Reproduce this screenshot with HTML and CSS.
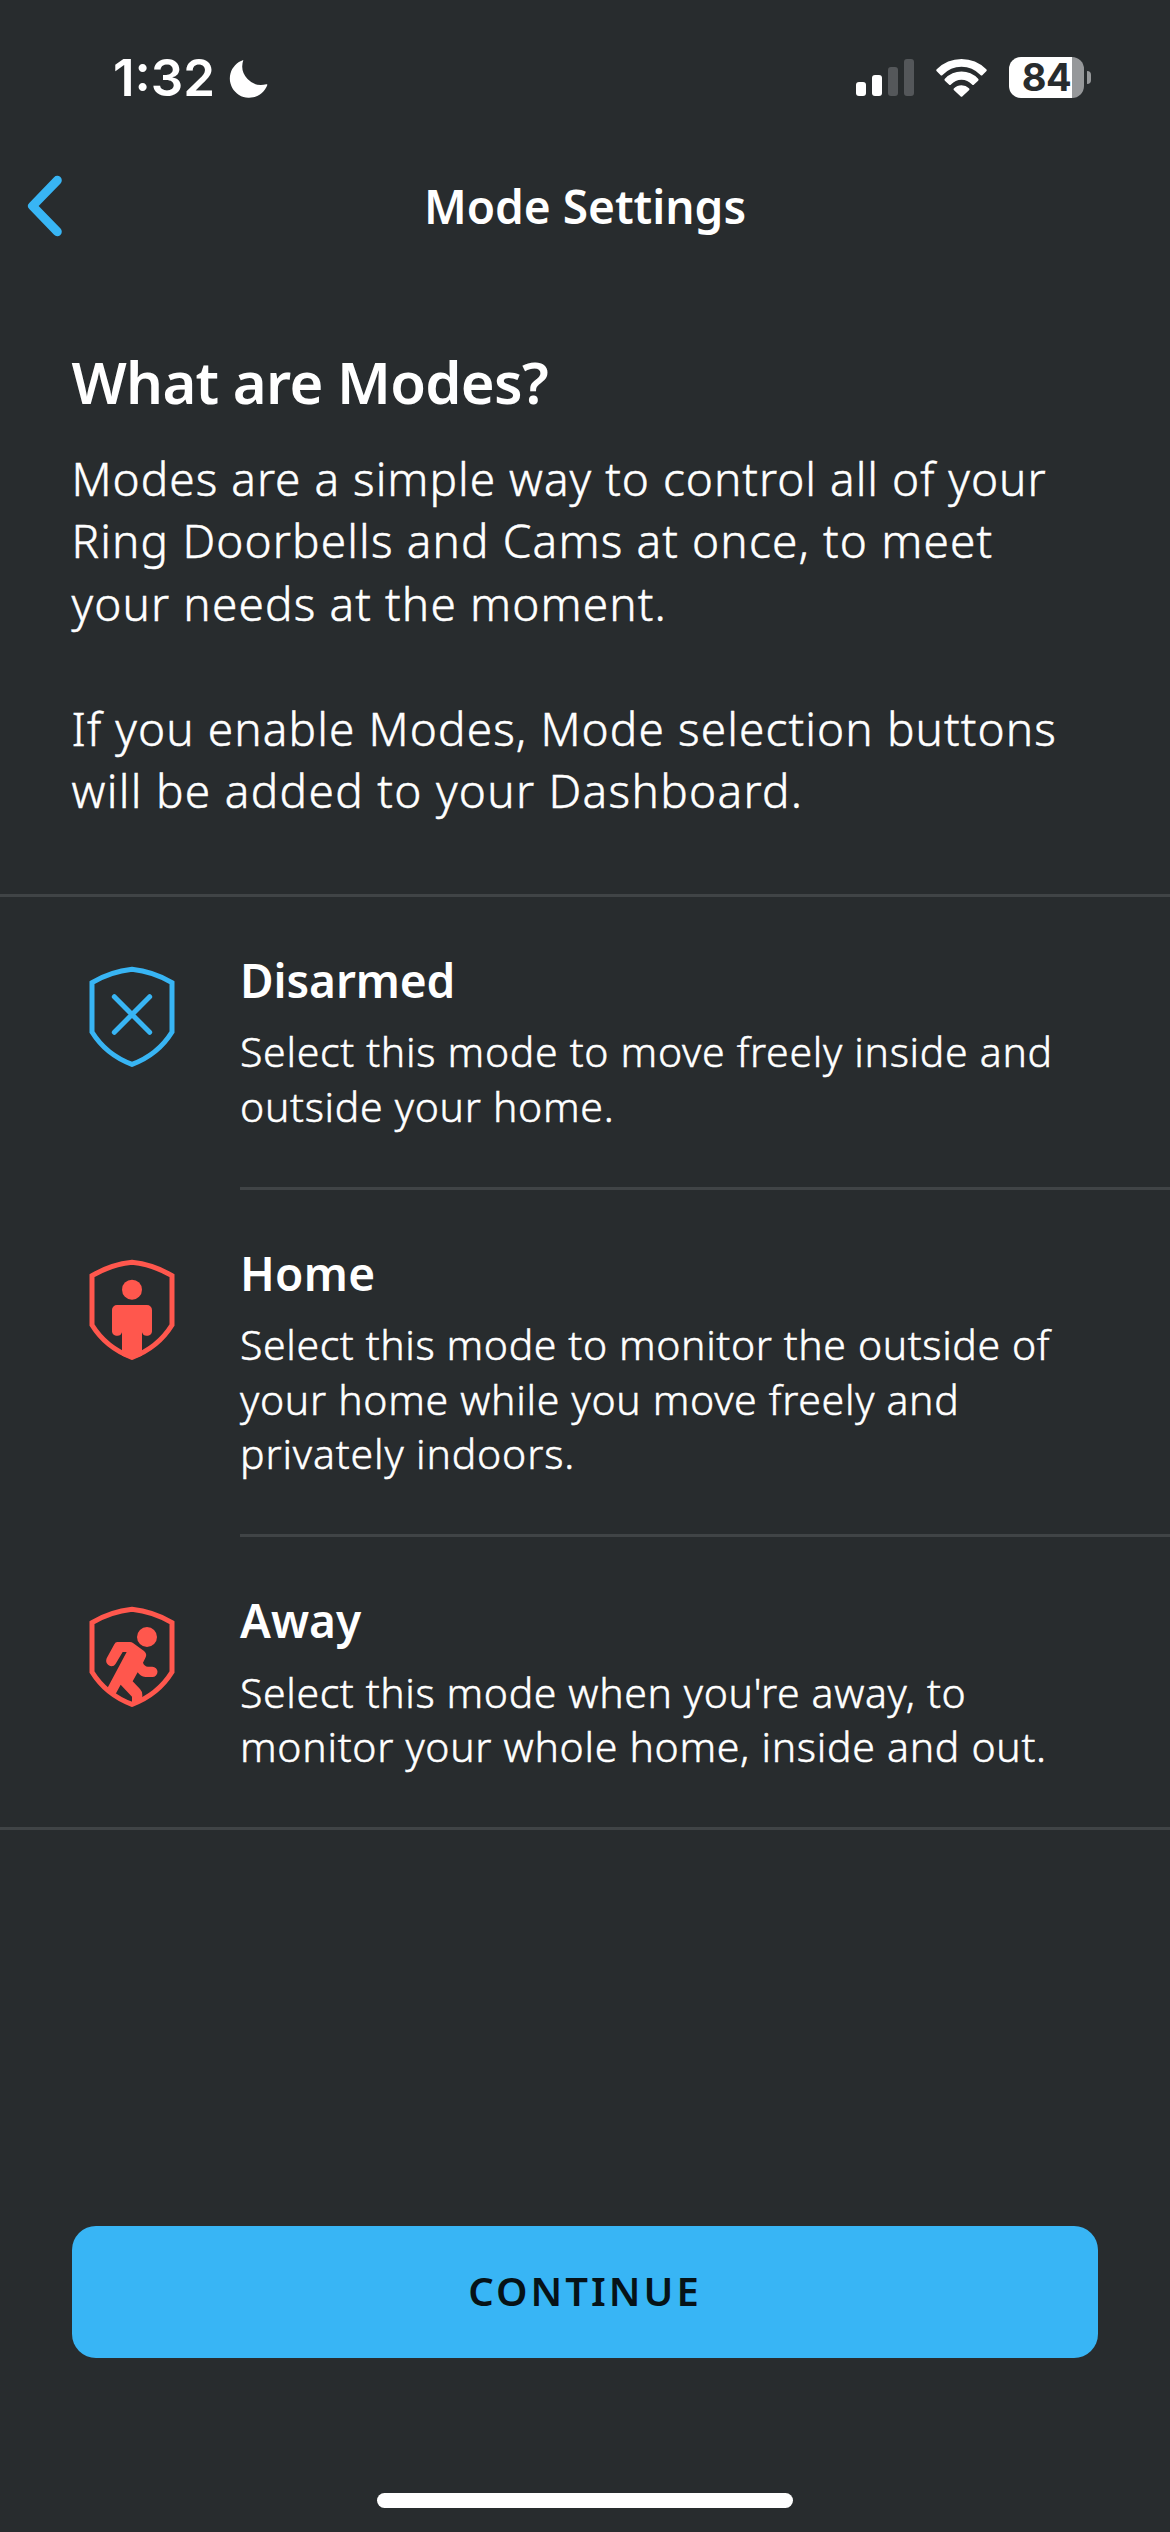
FILE: index.html
```html
<!DOCTYPE html>
<html lang="en">
<head>
<meta charset="utf-8">
<title>Mode Settings</title>
<link rel="stylesheet" href="styles.css">
</head>
<body>
<div class="screen">
  <div class="status">
    <div class="status-left">
      <span class="time">1:32</span>
      <svg class="moon" viewBox="0 0 120 120"><path d="M46 3A58 58 0 1 0 118 78Q119 75 115 76A57 57 0 0 1 46 3Z"/></svg>
    </div>
    <div class="status-right">
      <svg class="signal" viewBox="0 0 58 37">
        <rect x="0" y="23" width="10" height="14" rx="3"/>
        <rect x="16" y="16" width="10" height="21" rx="3"/>
        <rect class="dim" x="32" y="8" width="10" height="29" rx="3"/>
        <rect class="dim" x="48" y="0" width="10" height="37" rx="3"/>
      </svg>
      <svg class="wifi" viewBox="0 0 150 112">
        <path d="M2 30Q33 0 75 0T148 30Q151 33 148 36L137 47Q134 50 131 47Q107 23 75 23T19 47Q16 50 13 47L2 36Q-1 33 2 30Z"/>
        <path d="M26 58Q47 37 75 37T124 58Q127 61 124 64L112 75Q109 78 106 75Q93 61 75 61T44 75Q41 78 38 75L26 64Q23 61 26 58Z"/>
        <path d="M53 86Q62 77 75 77T97 86Q100 89 97 92L78 110Q75 113 72 110L53 92Q50 89 53 86Z"/>
      </svg>
      <div class="battery">
        <span class="battery-body">84</span>
        <span class="battery-cap"></span>
      </div>
    </div>
  </div>

  <header class="nav">
    <svg class="back" viewBox="0 0 40 64"><path d="M32.300 6.300L7.500 32L32.300 57.700"/></svg>
    <h1 class="nav-title">Mode Settings</h1>
  </header>

  <section class="intro">
    <h2 class="intro-title">What are Modes?</h2>
    <p class="intro-text"><span>Modes are a simple way to control all of your</span> <span>Ring Doorbells and Cams at once, to meet</span> <span>your needs at the moment.</span></p>
    <p class="intro-text second"><span>If you enable Modes, Mode selection buttons</span> <span>will be added to your Dashboard.</span></p>
  </section>

  <ul class="modes">
    <li class="mode disarmed">
      <svg class="shield" viewBox="0 0 390 390">
        <path class="line" d="M66 98Q122 65 186 58Q250 65 306 98V246Q264 314 186 343Q108 314 66 246Z"/>
        <path class="line round" d="M133 140L239 247M239 140L133 247"/>
      </svg>
      <div class="mode-text">
        <h3>Disarmed</h3>
        <p><span>Select this mode to move freely inside and</span> <span>outside your home.</span></p>
      </div>
    </li>
    <li class="mode home">
      <svg class="shield" viewBox="0 0 390 390">
        <path class="line" d="M66 98Q122 65 186 58Q250 65 306 98V246Q264 314 186 343Q108 314 66 246Z"/>
        <circle cx="186" cy="140" r="30"/>
        <path d="M141 186H231a15 15 0 0 1 15 15V261a15.500 15.500 0 0 1-30 7V338L186 348L156 338V268a15.500 15.500 0 0 1-30-7V201a15 15 0 0 1 15-15Z"/>
      </svg>
      <div class="mode-text">
        <h3>Home</h3>
        <p><span>Select this mode to monitor the outside of</span> <span>your home while you move freely and</span> <span>privately indoors.</span></p>
      </div>
    </li>
    <li class="mode away">
      <svg class="shield" viewBox="0 0 390 390">
        <path class="line" d="M66 98Q122 65 186 58Q250 65 306 98V246Q264 314 186 343Q108 314 66 246Z"/>
        <circle cx="231" cy="141" r="30"/>
        <path d="M142 156H180Q185 156 189 159L222 183Q232 191 227 202L219 218Q223 229 234 230H247a15.500 15.500 0 0 1 0 31H226Q211 259 203 247L188 274L210 297Q217 304 217 315V335L186 343V320L152 284L134 317L112 295L170 186H158L137 221C128 237 102 225 110 205L133 163Q136 156 142 156Z"/>
      </svg>
      <div class="mode-text">
        <h3>Away</h3>
        <p><span>Select this mode when you're away, to</span> <span>monitor your whole home, inside and out.</span></p>
      </div>
    </li>
  </ul>

  <footer class="footer">
    <button class="continue">CONTINUE</button>
    <div class="home-indicator"></div>
  </footer>
</div>
</body>
</html>
```
FILE: styles.css
```css
* { box-sizing: border-box; margin: 0; padding: 0; }
body { background: #282c2e; color: #fff; font-family: "Noto Sans", "Open Sans", sans-serif; }
svg { display: block; flex: none; }
.screen { width: 1170px; height: 2532px; display: flex; flex-direction: column; overflow: hidden; }

.status { height: 155px; flex: none; display: flex; justify-content: space-between; align-items: center; padding: 0 79px 0 113px; font-family: Inter, sans-serif; }
.status-left, .status-right { display: flex; align-items: center; }
.time { font-size: 51px; font-weight: 600; line-height: 60px; }
.moon { width: 40px; height: 40px; fill: #fff; margin-left: 13px; margin-top: 2px; }
.signal { width: 58px; height: 37px; fill: #fff; margin-right: 22px; }
.signal .dim { fill: #54575a; }
.wifi { width: 51px; height: 38px; fill: #fff; margin-right: 22px; }
.battery { display: flex; align-items: center; gap: 3px; }
.battery-body { width: 75px; height: 41px; border-radius: 12px; background: linear-gradient(90deg, #fff 63px, #96989a 63px); color: #282c2e; font-size: 38px; font-weight: 700; line-height: 41px; text-align: center; letter-spacing: -0.5px; }
.battery-cap { width: 4px; height: 13px; border-radius: 0 5px 5px 0; background: #96989a; }

.nav { height: 102px; flex: none; display: grid; grid-template-columns: 1fr auto 1fr; align-items: center; padding: 0 25px; }
.back { width: 40px; height: 64px; fill: none; stroke: #38b5f4; stroke-width: 9; stroke-linecap: round; stroke-linejoin: round; }
.nav-title { font-size: 46px; font-weight: 600; line-height: 60px; letter-spacing: 0; }

.intro { padding: 84.500px 0 71.500px 71.500px; }
.intro-title { font-size: 58px; font-weight: 600; line-height: 80px; letter-spacing: -0.7px; margin-bottom: 25px; }
.intro-text { font-size: 46px; font-weight: 300; line-height: 62.600px; }
.intro-text + .intro-text { margin-top: 62.600px; }
.intro-text, .mode-text p { -webkit-text-stroke: 0.5px currentColor; }
.intro-text span, .mode-text span { display: block; white-space: nowrap; }
.intro-text span:nth-child(1) { letter-spacing: 1px; }
.intro-text span:nth-child(2) { letter-spacing: 1.130px; }
.intro-text span:nth-child(3) { letter-spacing: 1.130px; }
.second span:nth-child(1) { letter-spacing: 1.100px; }
.second span:nth-child(2) { letter-spacing: 1.300px; }

.modes { list-style: none; border-top: 3px solid #404446; border-bottom: 3px solid #404446; }
.mode { display: flex; padding-left: 70px; gap: 40px; }
.shield { width: 130px; height: 130px; margin-top: 53px; fill: currentColor; }
.shield .line { fill: none; stroke: currentColor; stroke-width: 15; }
.shield .round { stroke-linecap: round; }
.disarmed .shield { color: #38b5f4; }
.home .shield, .away .shield { color: #ff574d; }
.mode-text { flex: 1; padding: 53px 0 53.600px; border-bottom: 3px solid #404446; }
.mode:last-child .mode-text { border-bottom: 0; }
.mode-text h3 { font-size: 46px; font-weight: 600; line-height: 60px; margin-bottom: 14.600px; }
.disarmed h3 { letter-spacing: -0.1px; }
.home h3 { letter-spacing: 0.3px; }
.mode-text p { font-size: 41px; font-weight: 300; line-height: 54.400px; letter-spacing: 0.7px; }
.home span:first-child, .away span:first-child { letter-spacing: 0.62px; }
.home span:nth-child(3) { letter-spacing: 0.85px; }

.footer { margin-top: auto; padding: 0 72px 24px; display: flex; flex-direction: column; align-items: center; }
.continue { width: 100%; height: 132px; border: 0; border-radius: 24px; background: #38b5f5; color: #061318; font: 600 40px/60px "Noto Sans", sans-serif; letter-spacing: 3px; padding-bottom: 2px; }
.home-indicator { width: 416px; height: 15px; border-radius: 8px; background: #fff; margin-top: 135px; }
```
